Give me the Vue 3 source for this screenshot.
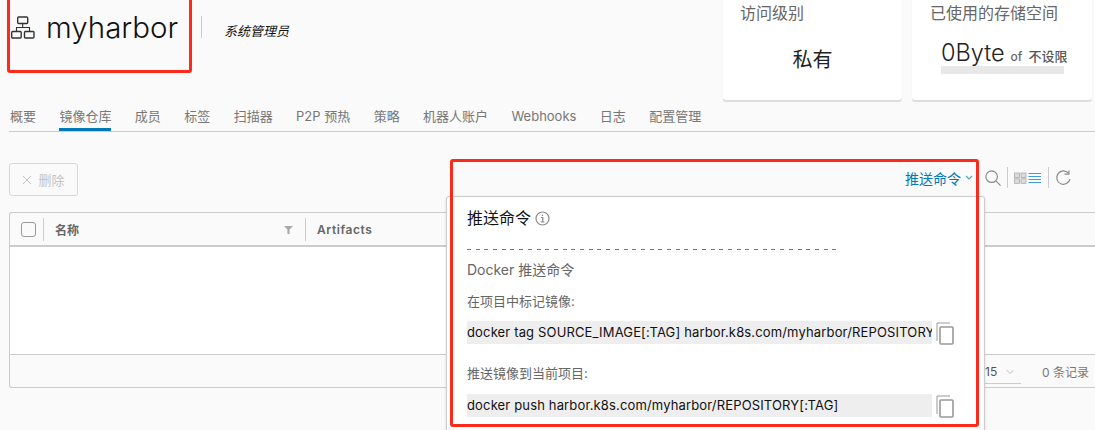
<script setup>
const tabs = ['概要', '镜像仓库', '成员', '标签', '扫描器', 'P2P 预热', '策略', '机器人账户', 'Webhooks', '日志', '配置管理']
</script>

<template>
  <div class="page">
    <header class="top">
      <div class="brand">
        <svg class="logo-icon" width="24" height="23" viewBox="0 0 24 23" fill="none" stroke="#333" stroke-width="1.4">
          <rect x="6.700" y="1" width="10" height="6.500" rx="1" />
          <rect x=".7" y="15.500" width="9.500" height="6.500" rx="1" />
          <rect x="13.500" y="15.500" width="9.500" height="6.500" rx="1" />
          <path d="M11.700 7.500v4M5.500 15.500v-4h13v4" stroke-width="1.100" />
        </svg>
        <span class="name">myharbor</span>
        <span class="divider"></span>
        <span class="role">系统管理员</span>
      </div>
      <section class="card card-access">
        <h3>访问级别</h3>
        <p class="access-value">私有</p>
      </section>
      <section class="card card-storage">
        <h3>已使用的存储空间</h3>
        <div class="storage">
          <div class="usage"><span class="used">0Byte</span><span class="of">of</span><span class="limit">不设限</span></div>
          <div class="bar"></div>
        </div>
      </section>
    </header>

    <nav class="tabs">
      <a v-for="(t, i) in tabs" :key="t" class="tab" :class="{ active: i === 1 }">{{ t }}</a>
    </nav>

    <div class="toolbar">
      <button class="del">
        <svg width="10" height="10" viewBox="0 0 10 10" fill="none" stroke="#c4c4c4" stroke-width="1"><path d="M1 1l8 8M9 1l-8 8" /></svg>
        删除
      </button>
      <div class="tools">
        <span class="push">推送命令
          <svg width="8" height="6" viewBox="0 0 8 6" fill="none" stroke="#5ba4c9" stroke-width="1.200"><path d="M1 1l3 3 3-3" /></svg>
        </span>
        <svg class="search" width="16" height="16" viewBox="0 0 18 18" fill="none" stroke="#8a8a8a" stroke-width="1.300">
          <circle cx="7.500" cy="7.500" r="6.500" /><path d="M12.500 12.500l5 5" />
        </svg>
        <span class="tool-sep"></span>
        <svg width="28" height="12" viewBox="0 0 28 12" fill="none">
          <g fill="#dcdcdc" stroke="#aaa" stroke-width=".8">
            <rect x=".5" y="1" width="5" height="4.500" /><rect x="7" y="1" width="5" height="4.500" />
            <rect x=".5" y="6.800" width="5" height="4.500" /><rect x="7" y="6.800" width="5" height="4.500" />
          </g>
          <path d="M14.500 1.500h12.500M14.500 4.500h12.500M14.500 7.500h12.500M14.500 10.500h12.500" stroke="#3a9fd0" stroke-width="1.200" />
        </svg>
        <span class="tool-sep"></span>
        <svg width="16" height="16" viewBox="0 0 16 16" fill="none" stroke="#8a8a8a" stroke-width="1.200">
          <path d="M13.500 3.200A6.700 6.700 0 1 0 15 9" /><path d="M9.500 4.200h4.400V.6" />
        </svg>
      </div>
    </div>

    <div class="grid">
      <div class="grid-head">
        <div class="cell-check"><span class="checkbox"></span></div>
        <div class="cell-name">
          <span>名称</span>
          <svg width="9" height="9" viewBox="0 0 9 9" fill="#a9a9a9"><path d="M0 1h9L5.600 4.600V9H3.400V4.600z" /></svg>
        </div>
        <div class="cell-art">Artifacts</div>
      </div>
      <div class="grid-body"></div>
      <div class="grid-foot">
        <span class="size">15
          <svg width="8" height="6" viewBox="0 0 8 6" fill="none" stroke="#bbb" stroke-width="1"><path d="M.5 1l3.500 3.500L7.500 1" /></svg>
        </span>
        <span class="count">0 条记录</span>
      </div>
    </div>

    <div class="popover">
      <div class="pop-title">推送命令
        <svg width="15" height="15" viewBox="0 0 15 15" fill="none" stroke="#8a8a8a"><circle cx="7.500" cy="7.500" r="6.500" stroke-width="1.200" /><path d="M7.500 3.500v1.500M6 6.500h1.800v4.500M5.800 11h3.600" stroke-width="1.200" /></svg>
      </div>
      <div class="dashes"></div>
      <div class="pop-sub">Docker 推送命令</div>
      <div class="cmd-label">在项目中标记镜像:</div>
      <div class="cmd-row">
        <div class="cmd">docker tag SOURCE_IMAGE[:TAG] harbor.k8s.com/myharbor/REPOSITORY[:TAG]</div>
        <svg class="copy" width="18" height="23" viewBox="0 0 18 23" fill="none" stroke="#999">
          <path d="M1 19V1h13" stroke-width="1" /><rect x="4" y="5" width="13" height="17" rx="1" stroke-width="1.600" />
        </svg>
      </div>
      <div class="cmd-label second">推送镜像到当前项目:</div>
      <div class="cmd-row second-row">
        <div class="cmd">docker push harbor.k8s.com/myharbor/REPOSITORY[:TAG]</div>
        <svg class="copy" width="18" height="23" viewBox="0 0 18 23" fill="none" stroke="#999">
          <path d="M1 19V1h13" stroke-width="1" /><rect x="4" y="5" width="13" height="17" rx="1" stroke-width="1.600" />
        </svg>
      </div>
    </div>

    <div class="mark mark-logo"></div>
    <div class="mark mark-push"></div>
  </div>
</template>

<style scoped>
.page {
  position: relative;
  width: 1095px;
  height: 430px;
  overflow: hidden;
  background: #fafafa;
  font-family: "Inter", "Noto Sans CJK SC", sans-serif;
  color: #565656;
}
.top { display: flex; height: 101px; }
.brand { display: flex; align-items: flex-start; width: 723px; }
.logo-icon { margin: 16px 0 0 11px; flex: none; }
.name { width: 132px; flex: none; margin: 7px 0 0 11px; font-size: 29.500px; line-height: 40px; color: #111; font-weight: 300; white-space: nowrap; }
.divider { width: 1px; height: 22px; flex: none; margin: 16px 0 0 23px; background: #ccc; }
.role { margin: 21px 0 0 22px; font-size: 13px; line-height: 20px; font-style: italic; color: #111; }
.card {
  width: 179px;
  height: 100px;
  box-sizing: border-box;
  background: #fff;
  border-radius: 0 0 3px 3px;
  box-shadow: 0 2px 0 #ddd, 0 0 1px #ddd;
}
.card-storage { margin-left: 10px; width: 180px; }
.card h3 { margin: 2px 0 0 17px; font-size: 16px; line-height: 22px; font-weight: 400; color: #666; }
.access-value { margin: 22px 0 0; text-align: center; font-size: 20px; line-height: 28px; color: #222; }
.card-storage h3 { margin-left: 18px; }
.storage { width: 123px; margin: 10px 0 0 29px; }
.usage { display: flex; align-items: baseline; height: 29px; padding-top: 3px; line-height: 32px; white-space: nowrap; }
.used { font-size: 23.500px; color: #222; font-weight: 300; }
.of { margin-left: 6px; font-size: 12px; font-weight: 500; color: #666; }
.limit { margin-left: 6px; font-size: 13px; font-weight: 500; color: #555; }
.bar { height: 8px; background: #e8e8e8; }

.tabs {
  display: flex;
  gap: 23.400px;
  height: 30px;
  margin-left: 9px;
  padding-left: 1px;
  border-bottom: 1px solid #ccc;
}
.tab { font-size: 13px; line-height: 30px; color: #777; position: relative; }
.tab.active::after {
  content: "";
  position: absolute;
  left: 0;
  right: 0;
  bottom: 0;
  height: 3px;
  background: #0079b8;
}

.toolbar { display: flex; justify-content: space-between; height: 33px; margin: 31px 0 0 9px; }
.del {
  display: flex;
  align-items: center;
  justify-content: center;
  gap: 6px;
  width: 69px;
  height: 33px;
  padding: 0;
  border: 1px solid #d8d8d8;
  border-radius: 3px;
  background: transparent;
  font: 13px "Inter", "Noto Sans CJK SC", sans-serif;
  color: #c4c4c4;
}
.tools { display: flex; align-items: center; height: 33px; box-sizing: border-box; padding: 0 24px 4px 0; }
.push { display: flex; align-items: center; gap: 4px; font-size: 14px; color: #0079b8; margin-right: 12px; }
.tool-sep { width: 1px; height: 21px; margin: 0 6px; background: #ccc; }

.grid {
  margin: 16px 0 0 9px;
  height: 176px;
  box-sizing: border-box;
  border: 1px solid #ccc;
  border-right: 0;
  border-radius: 3px 0 0 3px;
  display: flex;
  flex-direction: column;
}
.grid-head { display: flex; height: 32px; border-bottom: 2px solid #ccc; align-items: center; font-size: 12px; font-weight: 600; color: #666; }
.cell-check { width: 34px; height: 23px; border-right: 1px solid #ccc; display: flex; align-items: center; padding-left: 11px; box-sizing: border-box; }
.checkbox { width: 13px; height: 13px; border: 1px solid #999; border-radius: 3px; }
.cell-name { width: 262px; height: 23px; box-sizing: border-box; padding: 0 12px 0 11px; display: flex; align-items: center; justify-content: space-between; border-right: 1px solid #ccc; }
.cell-art { padding-left: 11px; letter-spacing: .6px; }
.grid-body { flex: 1; background: #fff; }
.grid-foot {
  height: 32px;
  border-top: 1px solid #ccc;
  display: flex;
  align-items: center;
  justify-content: flex-end;
  padding-right: 6px;
  font-size: 12px;
  color: #777;
}
.size { display: flex; align-items: center; justify-content: space-between; width: 36px; box-sizing: border-box; height: 23px; padding-right: 7px; border-bottom: 1px solid #ccc; color: #555; margin-top: 2px; }
.count { margin-left: 21px; }

.popover {
  position: absolute;
  left: 446px;
  top: 196px;
  width: 539px;
  height: 250px;
  box-sizing: border-box;
  padding: 10px 0 0 20px;
  background: #fff;
  border: 1px solid #ccc;
  border-radius: 3px;
  box-shadow: 0 1px 3px rgba(0, 0, 0, .12);
}
.pop-title { display: flex; align-items: center; gap: 4px; font-size: 16px; line-height: 22px; color: #111; }
.dashes {
  width: 374px;
  height: 1px;
  margin-top: 20px;
  background: repeating-linear-gradient(90deg, #777 0 4px, transparent 4px 8.700px);
}
.pop-sub { margin-top: 10px; font-size: 14px; line-height: 20px; color: #666; }
.cmd-label { margin-top: 11px; font-size: 13px; line-height: 20px; color: #666; }
.cmd-label.second { margin-top: 19px; }
.cmd-row { display: flex; gap: 4px; margin-top: 10px; height: 23px; }
.cmd-row.second-row { margin-top: 11px; }
.cmd {
  width: 465px;
  height: 23px;
  background: #eee;
  font-size: 13px;
  letter-spacing: .15px;
  line-height: 23px;
  color: #111;
  white-space: nowrap;
  overflow: hidden;
}
.copy { margin-top: 1px; flex: none; }

.mark { position: absolute; box-sizing: border-box; border: 3px solid #fb2a1a; border-radius: 3px; }
.mark-logo { left: 7px; top: -3px; width: 185px; height: 76px; }
.mark-push { left: 450px; top: 159px; width: 529px; height: 268px; }
</style>
